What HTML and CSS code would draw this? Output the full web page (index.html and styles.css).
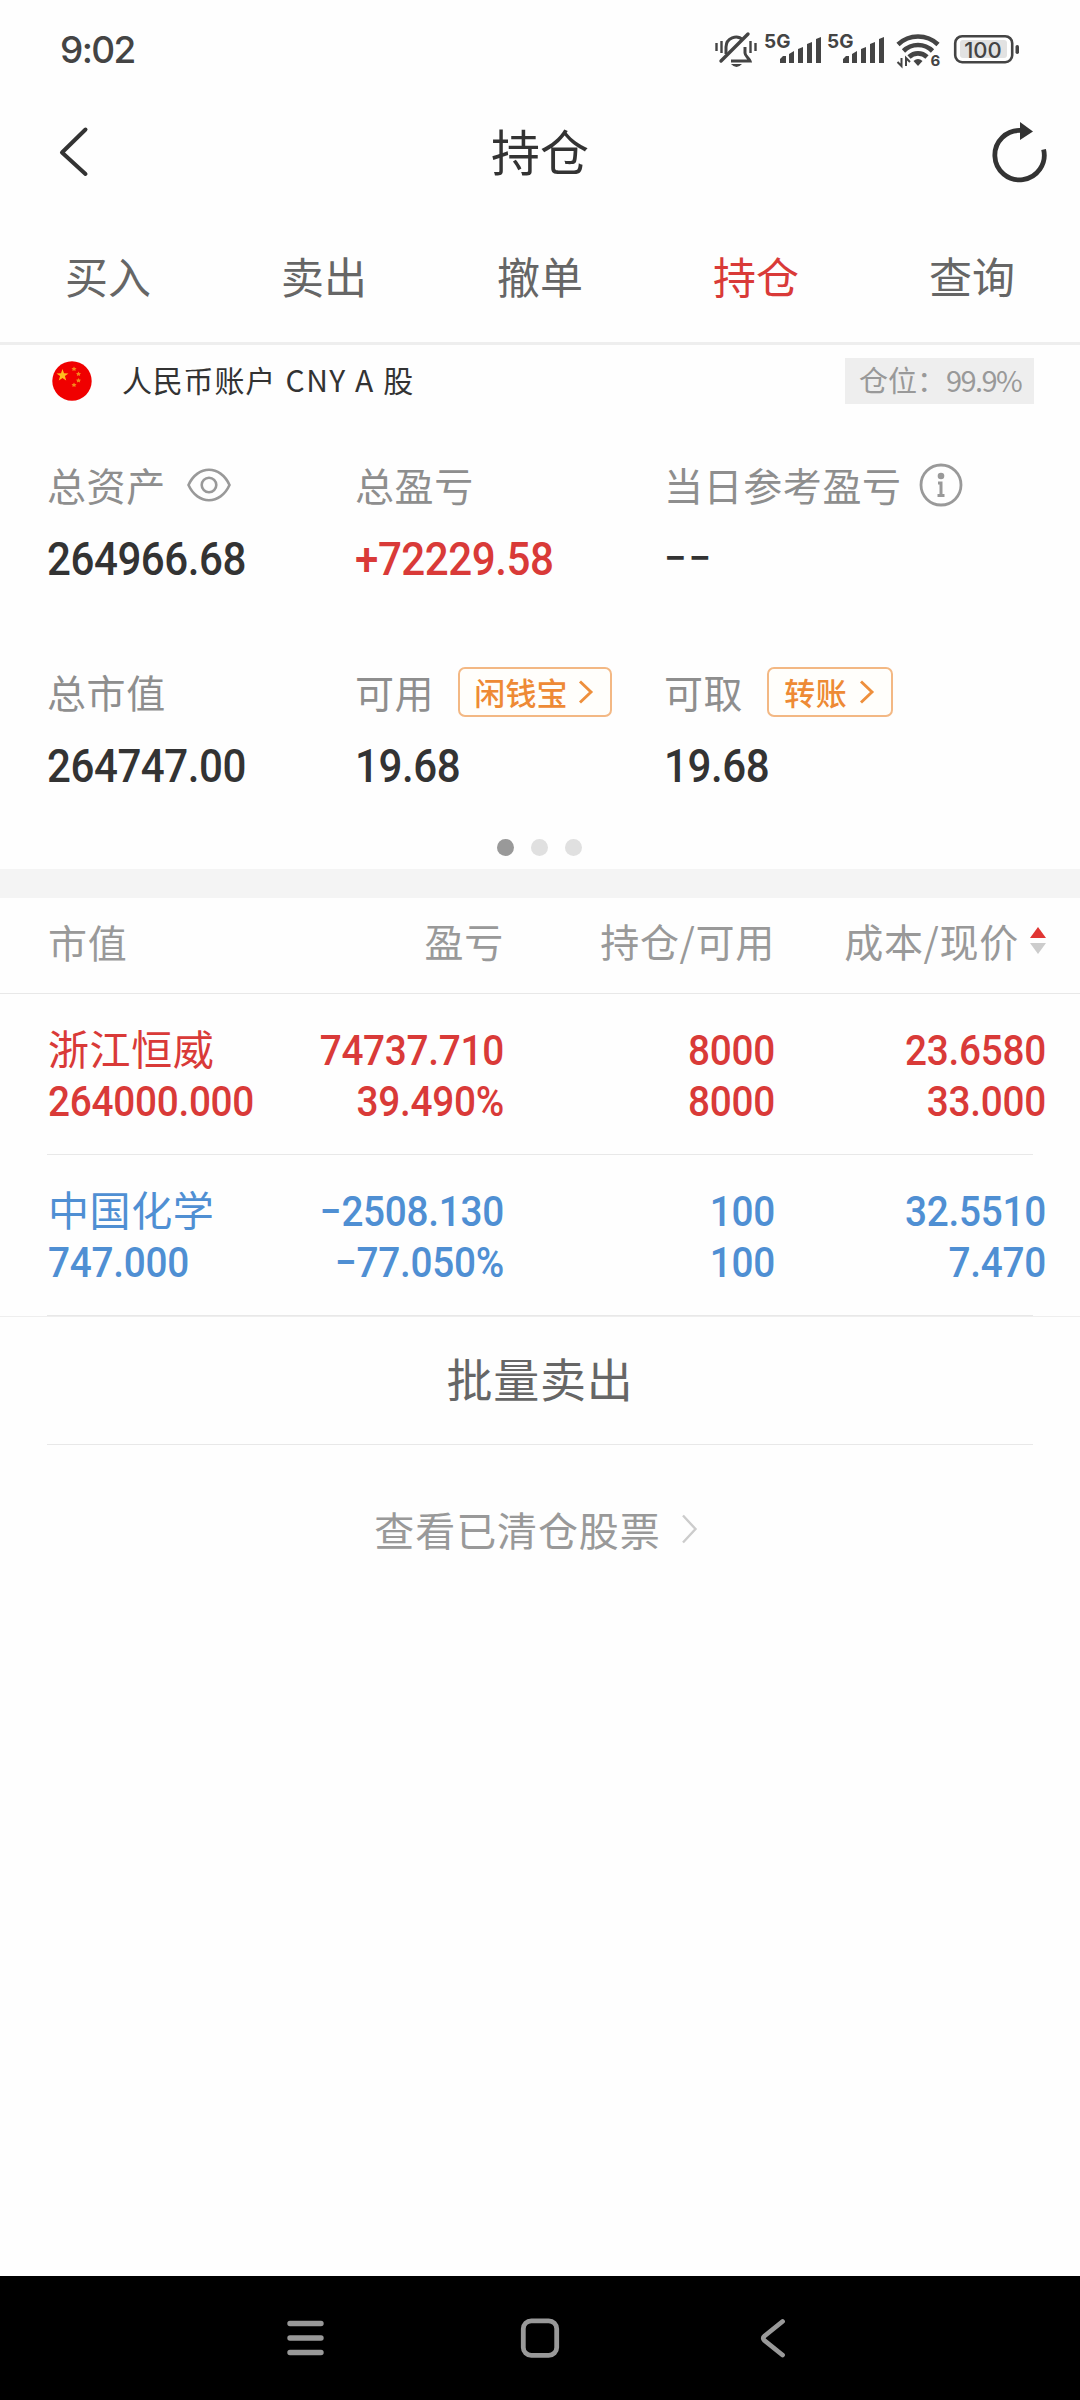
FILE: index.html
```html
<!DOCTYPE html>
<html lang="zh-CN">
<head>
<meta charset="utf-8">
<title>持仓</title>
<link rel="stylesheet" href="styles.css">
</head>
<body>
<div class="screen">
  <div class="status">
    <span class="time">9:02</span>
    <svg class="status-icons" width="310" height="40" viewBox="710 30 310 40">
      <g fill="none" stroke="#444" stroke-width="3">
        <path d="M726 54V47a10 10 0 0 1 17-7M745 47v6c0 3 4 5 5 8H731"/>
        <path d="M721 61L748 34" stroke-width="3.4" stroke-linecap="round"/>
        <path d="M716.500 43v8M721.500 41v12M750.500 41v12M755.500 43v8" stroke-width="2.400"/>
      </g>
      <path d="M731 64h11q-5.500 6-11 0z" fill="#444"/>
      <text class="net" x="764" y="48">5G</text>
      <text class="net" x="827" y="48">5G</text>
      <g id="bars" fill="#444">
        <path d="M780 63v-4l3-3h3v7zM789 63v-9l5-3v12zM798 63v-14l5-2v16zM807 63v-19l5-2v21zM816 63v-24l5-2v26z"/>
        <path d="M843 63v-4l3-3h3v7zM852 63v-9l5-3v12zM861 63v-14l5-2v16zM870 63v-19l5-2v21zM879 63v-24l5-2v26z"/>
      </g>
      <g fill="none" stroke="#444" stroke-width="4.600">
        <path d="M898 44.500a29 29 0 0 1 40 0"/>
        <path d="M903.500 51a20.500 20.500 0 0 1 29 0"/>
        <path d="M909 57a13 13 0 0 1 18 0"/>
      </g>
      <path d="M913.500 61q4.500-4 9 0l-4.500 5z" fill="#444"/>
      <path d="M901.500 58v8l-4-4M906 66v-8l4 4" fill="none" stroke="#444" stroke-width="2"/>
      <text class="six" x="930.500" y="65.500">6</text>
      <rect x="955.200" y="36.200" width="57" height="26" rx="7" fill="#fff" stroke="#444" stroke-width="2.600"/>
      <rect x="960" y="40" width="47" height="18" rx="3" fill="#e2e2e2"/>
      <rect x="1015.500" y="45" width="3.500" height="9" rx="1.700" fill="#444"/>
      <text class="batt" x="983" y="58" text-anchor="middle">100</text>
    </svg>
  </div>

  <div class="titlebar">
    <svg width="30" height="54" viewBox="59 125 30 54"><path d="M85.500 129.500L62 152.500L85.500 174" fill="none" stroke="#333" stroke-width="4" stroke-linecap="round" stroke-linejoin="round"/></svg>
    <h1>持仓</h1>
    <svg width="58" height="66" viewBox="990 118 58 66"><path d="M1021 129.500A24.700 24.700 0 1 0 1043.600 148.500" fill="none" stroke="#333" stroke-width="4.800"/><path d="M1020 121v18l13-8.500z" fill="#333"/></svg>
  </div>

  <div class="tabs">
    <span>买入</span><span>卖出</span><span>撤单</span><span class="active">持仓</span><span>查询</span>
  </div>

  <div class="account">
    <svg width="40" height="40" viewBox="0 0 40 40">
      <circle cx="20" cy="20" r="19.700" fill="#f00000"/>
      <path id="star" d="M10.500 8l1.500 4.300 4.500.1-3.600 2.700 1.300 4.400-3.700-2.600-3.700 2.600 1.300-4.400-3.600-2.700 4.500-.1z" fill="#ffbe1e"/>
      <g fill="#f58a1c"><path d="M22 5.500l.8 1.500 1.700.2-1.200 1.200.3 1.700-1.600-.8-1.600.8.300-1.700-1.200-1.200 1.700-.2z"/><path d="M26.500 10.500l.8 1.500 1.700.2-1.200 1.200.3 1.700-1.600-.8-1.600.8.300-1.700-1.200-1.200 1.700-.2z"/><path d="M26.500 17l.8 1.500 1.700.2-1.200 1.200.3 1.700-1.600-.8-1.600.8.300-1.700-1.200-1.200 1.700-.2z"/><path d="M22 21.500l.8 1.500 1.700.2-1.200 1.200.3 1.700-1.600-.8-1.600.8.300-1.700-1.200-1.200 1.700-.2z"/></g>
    </svg>
    <span class="acct-name">人民币账户 <i>CNY A</i> 股</span>
    <span class="ratio">仓位：<b>99.9%</b></span>
  </div>

  <div class="stats">
    <div class="stat">
      <div class="label">总资产<svg class="eye" width="44" height="34" viewBox="0 0 44 34" fill="none" stroke="#999" stroke-width="2.600"><path d="M1.500 17C6 7 14 1.800 22 1.800S38 7 42.500 17C38 27 30 32.200 22 32.200S6 27 1.500 17z"/><circle cx="22" cy="17" r="7.300"/></svg></div>
      <div class="value">264966.68</div>
    </div>
    <div class="stat">
      <div class="label">总盈亏</div>
      <div class="value up">+72229.58</div>
    </div>
    <div class="stat">
      <div class="label">当日参考盈亏<svg class="info" width="44" height="44" viewBox="0 0 44 44"><circle cx="22" cy="22" r="20" fill="none" stroke="#999" stroke-width="2.800"/><circle cx="22" cy="13" r="3.300" fill="#999"/><path d="M19 20h3v12M18.500 32.500h7" fill="none" stroke="#999" stroke-width="3"/></svg></div>
      <div class="value dash">−−</div>
    </div>
    <div class="stat">
      <div class="label">总市值</div>
      <div class="value">264747.00</div>
    </div>
    <div class="stat">
      <div class="label">可用<span class="pill wide">闲钱宝<svg width="16" height="26" viewBox="0 0 16 26"><path d="M2 2.500L13 13L2 23.500" fill="none" stroke="#ee8f3c" stroke-width="2.900"/></svg></span></div>
      <div class="value">19.68</div>
    </div>
    <div class="stat">
      <div class="label">可取<span class="pill">转账<svg width="16" height="26" viewBox="0 0 16 26"><path d="M2 2.500L13 13L2 23.500" fill="none" stroke="#ee8f3c" stroke-width="2.900"/></svg></span></div>
      <div class="value">19.68</div>
    </div>
  </div>
  <div class="dots"><i class="on"></i><i></i><i></i></div>
  <div class="band"></div>

  <div class="grid head">
    <span class="first">市值</span><span>盈亏</span><span>持仓/可用</span>
    <span class="sort">成本/现价<svg width="16" height="27" viewBox="0 0 16 27"><path d="M0 11L8 0l8 11z" fill="#e03533"/><path d="M0 16h16l-8 11z" fill="#ccc"/></svg></span>
  </div>
  <div class="grid row up">
    <span class="name">浙江恒威</span><span>74737.710</span><span>8000</span><span>23.6580</span>
    <span>264000.000</span><span>39.490%</span><span>8000</span><span>33.000</span>
  </div>
  <div class="rule"></div>
  <div class="grid row down">
    <span class="name">中国化学</span><span>−2508.130</span><span>100</span><span>32.5510</span>
    <span>747.000</span><span>−77.050%</span><span>100</span><span>7.470</span>
  </div>
  <div class="rule"></div>
  <div class="batch">批量卖出</div>
  <div class="rule"></div>
  <div class="cleared">查看已清仓股票<svg width="17" height="30" viewBox="0 0 17 30"><path d="M2 1.500L14.500 15L2 28.500" fill="none" stroke="#ccc" stroke-width="2.400"/></svg></div>

  <div class="navbar">
    <svg width="40" height="44" viewBox="0 0 40 44"><path d="M5 7.500h31M5 22h31M5 36.500h31" stroke="#999" stroke-width="5.400" stroke-linecap="round"/></svg>
    <svg width="40" height="44" viewBox="0 0 40 44"><rect x="3.300" y="4.800" width="33.400" height="34.600" rx="8" fill="none" stroke="#999" stroke-width="4.800"/></svg>
    <svg width="40" height="44" viewBox="0 0 40 44"><path d="M27.500 5.500L9.500 20Q7 22 9.500 24.500L27.500 39" fill="none" stroke="#999" stroke-width="4.800" stroke-linecap="round"/></svg>
  </div>
</div>
</body>
</html>
```
FILE: styles.css
```css
* { box-sizing: border-box; }
body {
  margin: 0;
  background: #fefefe;
  color: #333;
  font-family: "Noto Sans CJK SC", sans-serif;
}
svg { display: block; flex: none; }
.screen {
  width: 1080px;
  height: 2400px;
  display: flex;
  flex-direction: column;
}

.status {
  height: 100px;
  padding: 0 60px 0 60px;
  display: flex;
  justify-content: space-between;
  align-items: center;
}
.time { font: 500 37px/40px Inter, sans-serif; color: #444; letter-spacing: -1.6px; }
.status-icons text { font-family: Inter, sans-serif; fill: #444; }
.net { font-size: 19px; font-weight: 700; }
.six { font-size: 15px; font-weight: 700; }
.batt { font-size: 22px; font-weight: 500; }

.titlebar {
  height: 108px;
  padding: 0 32px 4px 59px;
  display: flex;
  justify-content: space-between;
  align-items: center;
}
h1 { margin: 0 0 5px 1px; font-size: 49px; line-height: 60px; font-weight: 400; }

.tabs {
  height: 137px;
  padding-bottom: 1px;
  border-bottom: 3px solid #eee;
  display: grid;
  grid-template-columns: repeat(5, 1fr);
  align-items: center;
  text-align: center;
  font-size: 43px;
  color: #666;
}
.tabs .active { color: #d93a38; }

.account {
  height: 72px;
  padding: 0 46px 0 52px;
  display: flex;
  align-items: center;
}
.acct-name { margin-left: 30px; font-size: 30px; line-height: 40px; letter-spacing: 0.8px; padding-bottom: 4px; }
.acct-name i { margin: 0 1px 0 2px; font-style: normal; letter-spacing: 1.5px; }
.ratio {
  margin-left: auto;
  width: 189px;
  height: 46px;
  padding-left: 14px;
  background: #eee;
  color: #999;
  font-size: 29px;
  line-height: 42px;
  white-space: nowrap;
}
.ratio b { font-weight: 400; letter-spacing: -1.6px; }

.stats {
  height: 414px;
  padding: 36px 0 0 47px;
  display: grid;
  grid-template-columns: 308px 309px 1fr;
  grid-template-rows: 207px 207px;
}
.label {
  height: 64px;
  padding-bottom: 1px;
  display: flex;
  align-items: center;
  font-size: 39px;
  line-height: 60px;
  letter-spacing: 0.6px;
  color: #8e8e8e;
  padding-bottom: 2px;
}
.eye { margin: 2px 0 0 21px; }
.info { margin: 2px 0 0 17px; }
.value {
  height: 50px;
  margin-top: 17px;
  font: 500 46px/50px Roboto, sans-serif;
  letter-spacing: -0.5px;
  transform: scaleX(0.915);
  transform-origin: left;
}
.dash { font-size: 40px; letter-spacing: 2px; transform: none; }
.up { color: #d93a38; }
.down { color: #4f8fd3; }
.pill {
  width: 126px;
  height: 50px;
  margin: 2px 0 0 24px;
  padding-left: 15px;
  display: flex;
  align-items: center;
  gap: 12px;
  border: 2px solid #f3b884;
  border-radius: 7px;
  background: #fffefb;
  color: #ee8a35;
  font-size: 31px;
  font-weight: 500;
  line-height: 40px;
}
.wide { width: 154px; padding-left: 14px; gap: 10px; letter-spacing: 0.2px; }

.dots { height: 38px; display: flex; justify-content: center; gap: 17px; padding: 8px 2px 0 0; }
.dots i { width: 17px; height: 17px; border-radius: 50%; background: #e0e0e0; }
.dots .on { background: #999; }
.band { height: 29px; background: #f4f4f4; }

.grid {
  padding: 0 34px 0 48px;
  display: grid;
  grid-template-columns: 216px 240px 271px 1fr;
}
.grid span:not(:nth-child(4n+1)) { text-align: right; }
.head {
  height: 96px;
  padding-bottom: 11px;
  border-bottom: 1px solid #e8e8e8;
  align-items: center;
  font-size: 39px;
  letter-spacing: 0.7px;
  color: #999;
}
.head .first { padding-top: 2px; }
.sort { display: flex; align-items: center; justify-content: flex-end; gap: 11px; }
.row {
  height: 160px;
  padding-top: 31px;
  grid-template-rows: 51px 51px;
  font: 500 42px/51px Roboto, sans-serif;
  letter-spacing: -0.3px;
}
.row span { transform: scaleX(0.922); transform-origin: right; }
.row span:nth-child(4n+1) { transform-origin: left; }
.row .name { font: 400 41px/44px "Noto Sans CJK SC", sans-serif; letter-spacing: 0.6px; transform: none; }
.rule { height: 1px; margin: 0 47px; background: #e8e8e8; }
.batch {
  height: 128px;
  border-top: 1px solid #eee;
  text-align: center;
  font-size: 46px;
  line-height: 120px;
  letter-spacing: 0.8px;
  color: #666;
}
.cleared {
  height: 168px;
  padding-right: 8px;
  display: flex;
  align-items: center;
  justify-content: center;
  gap: 20px;
  font-size: 40px;
  letter-spacing: 0.9px;
  color: #999;
}
.navbar {
  height: 124px;
  margin-top: auto;
  padding: 0 285px;
  background: #000;
  display: flex;
  justify-content: space-between;
  align-items: center;
}
```
